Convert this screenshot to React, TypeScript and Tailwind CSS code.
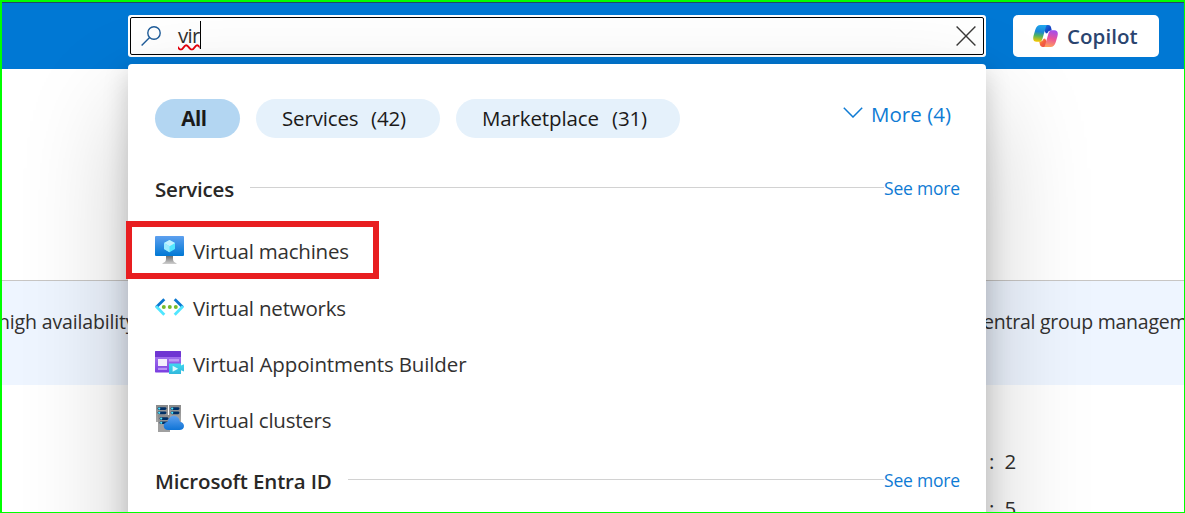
import React from "react";

function SearchIcon() {
  return (
    <svg className="h-5 w-5 shrink-0" viewBox="0 0 20 20" fill="none" stroke="#1f5c99" strokeWidth="1.4">
      <circle cx="13" cy="7" r="6.2" />
      <path d="M8.6 11.4 0.6 19.4" />
    </svg>
  );
}

function CloseIcon() {
  return (
    <svg className="h-5 w-5 shrink-0" viewBox="0 0 20 20" fill="none" stroke="#3b3a39" strokeWidth="1.4">
      <path d="M.6.6 19.4 19.4M19.4.6.6 19.4" />
    </svg>
  );
}

function CopilotIcon() {
  return (
    <svg className="h-[22px] w-[25px] shrink-0" viewBox="0 0 25 22">
      <defs>
        <linearGradient id="cpA" x1="0.5" y1="0" x2="0.4" y2="1">
          <stop offset="0" stopColor="#1fa7ee" />
          <stop offset=".4" stopColor="#1a86d6" />
          <stop offset=".65" stopColor="#52b35c" />
          <stop offset="1" stopColor="#f8c800" />
        </linearGradient>
        <linearGradient id="cpB" x1="0.6" y1="0" x2="0.4" y2="1">
          <stop offset="0" stopColor="#a04df0" />
          <stop offset=".5" stopColor="#ea5399" />
          <stop offset="1" stopColor="#ffa05c" />
        </linearGradient>
        <linearGradient id="cpC" x1="0" y1="0" x2="1" y2="1">
          <stop offset="0" stopColor="#1c7fe0" />
          <stop offset=".6" stopColor="#1443c4" />
          <stop offset="1" stopColor="#2a4bd8" />
        </linearGradient>
        <linearGradient id="cpD" x1="0" y1="0" x2="1" y2="1">
          <stop offset="0" stopColor="#ffb038" />
          <stop offset=".5" stopColor="#f4603c" />
          <stop offset="1" stopColor="#e8485c" />
        </linearGradient>
      </defs>
      <path d="M11 0h4.2c1.500 0 2.400.9 2.800 2.200l.8 3.200c-2.300 0-3.600.6-4.200 2.600L13 8.500 11 5Z" fill="url(#cpC)" />
      <path d="M14 22H9.800c-1.500 0-2.400-.9-2.800-2.200L6.200 16.600c2.300 0 3.600-.6 4.200-2.600L12 13.500 14 17Z" fill="url(#cpD)" />
      <path d="M14 0H7.500C4.800 0 3.200 2 2.300 4.800L.6 10.600C-.5 14.400.6 16.800 3.600 16.800h2.200c2 0 3-1 3.600-2.900L12.500 3.200C12.900 1.600 13.200.6 14 0Z" fill="url(#cpA)" />
      <path d="M11 22h6.500c2.700 0 4.300-2 5.200-4.800l1.700-5.800c1.100-3.800 0-6.200-3-6.200h-2.200c-2 0-3 1-3.600 2.900L12.500 18.800c-.4 1.600-.7 2.600-1.500 3.200Z" fill="url(#cpB)" />
    </svg>
  );
}

function VmIcon() {
  return (
    <svg className="h-[30px] w-[29px] shrink-0" viewBox="0 0 29 30">
      <defs>
        <linearGradient id="vmScreen" x1="0" y1="1" x2="0" y2="0">
          <stop offset="0" stopColor="#0078d4" />
          <stop offset="1" stopColor="#5ea0ef" />
        </linearGradient>
        <linearGradient id="vmStand" x1="0" y1="0" x2="0" y2="1">
          <stop offset="0" stopColor="#707070" />
          <stop offset="1" stopColor="#cfcfcf" />
        </linearGradient>
      </defs>
      <rect y="1" width="29" height="20" rx="1" fill="url(#vmScreen)" />
      <path d="M14.500 5 20 8.100v6L14.500 17.200 9 14.100v-6Z" fill="#50e6ff" />
      <path d="M14.500 5 20 8.100l-5.500 3.200L9 8.100Z" fill="#c3f1ff" />
      <path d="M14.500 11.300v5.900L9 14.100v-6Z" fill="#9cebff" />
      <path d="M11 21h7v3c0 2.500 1.200 3.300 3.500 4.200V29h-14v-.8C9.800 27.300 11 26.500 11 24Z" fill="url(#vmStand)" />
    </svg>
  );
}

function VnetIcon() {
  return (
    <svg className="h-[30px] w-[29px] shrink-0" viewBox="0 0 29 30" fill="none">
      <path d="M9.300 7.200 1.200 15.200" stroke="#0b78d0" strokeWidth="2.800" />
      <path d="m1 14.200 8.300 8.500" stroke="#50e6ff" strokeWidth="2.800" />
      <path d="m19.700 7.200 8.100 8" stroke="#0b78d0" strokeWidth="2.800" />
      <path d="m28 14.200-8.300 8.500" stroke="#50e6ff" strokeWidth="2.800" />
      <circle cx="8.800" cy="15" r="2" fill="#76bc2d" />
      <circle cx="14.800" cy="15" r="2" fill="#76bc2d" />
      <circle cx="20.800" cy="15" r="2" fill="#76bc2d" />
    </svg>
  );
}

function BuilderIcon() {
  return (
    <svg className="h-[30px] w-[29px] shrink-0" viewBox="0 0 29 30">
      <defs>
        <linearGradient id="vbBody" x1="0" y1="1" x2="0" y2="0">
          <stop offset="0" stopColor="#7a3de0" />
          <stop offset="1" stopColor="#b084f2" />
        </linearGradient>
        <linearGradient id="vbCam" x1="0" y1="0" x2="0" y2="1">
          <stop offset="0" stopColor="#3fd8f0" />
          <stop offset="1" stopColor="#32b8dc" />
        </linearGradient>
      </defs>
      <rect y="3" width="26" height="21.500" rx=".8" fill="url(#vbBody)" />
      <path d="M0 9V3.800C0 3.300.3 3 .8 3h24.400c.5 0 .8.3.8.800V9Z" fill="#6f35d2" />
      <rect x="3" y="11" width="9" height="7" fill="#f4eefb" />
      <rect x="14" y="11" width="10" height="2.500" fill="#c09af6" />
      <rect x="3" y="19.800" width="9" height="2.200" fill="#b890f4" />
      <path d="M14 15.500h12v2l3-1.200v7.200l-3-1.200v3.600H14Z" fill="url(#vbCam)" />
      <path d="m17.600 17.700 5.600 3-5.600 3Z" fill="#d9faff" />
    </svg>
  );
}

function ServerRack({ x, y, w }: { x: number; y: number; w: number }) {
  return (
    <g>
      <rect x={x} y={y} width={w} height="17" fill="url(#vcRack)" />
      {[2.200, 6.400].map((dy) => (
        <g key={dy}>
          <rect x={x + 1.6} y={y + dy} width={w - 3.200} height="2.800" rx="1.400" fill="#003067" />
          <circle cx={x + 3.200} cy={y + dy + 1.400} r="1.100" fill="#50e6ff" />
        </g>
      ))}
    </g>
  );
}

function ClusterIcon() {
  return (
    <svg className="h-[30px] w-[29px] shrink-0" viewBox="0 0 29 30">
      <defs>
        <linearGradient id="vcRack" x1="0" y1="0" x2="0" y2="1">
          <stop offset="0" stopColor="#8a8a8a" />
          <stop offset="1" stopColor="#a9a9a9" />
        </linearGradient>
        <linearGradient id="vcCloud" x1="0" y1="1" x2="0" y2="0">
          <stop offset="0" stopColor="#0f74d6" />
          <stop offset="1" stopColor="#5ea0ef" />
        </linearGradient>
      </defs>
      <ServerRack x={1} y={1} w={12} />
      <ServerRack x={14} y={1} w={12} />
      <ServerRack x={3} y={11} w={12} />
      <rect x="3" y="20" width="12" height="8" fill="#a0a0a0" />
      <path d="M13.300 26c-2.700 0-4.600-1.800-4.600-4.100 0-2.200 1.700-3.900 4-4.100.6-3.500 3-6 6.200-6 3.400 0 5.500 2.600 6.100 5.900 2.400.3 4 2 4 4.200 0 2.400-1.900 4.100-4.500 4.100Z" fill="url(#vcCloud)" />
    </svg>
  );
}

const services = [
  { name: "Virtual machines", icon: <VmIcon />, cls: "tracking-[-0.22px] mb-px" },
  { name: "Virtual networks", icon: <VnetIcon />, cls: "tracking-[-0.2px]" },
  { name: "Virtual Appointments Builder", icon: <BuilderIcon />, cls: "tracking-[-0.13px]" },
  { name: "Virtual clusters", icon: <ClusterIcon />, cls: "tracking-[-0.22px]" },
];

function SectionHeading({ title, cls }: { title: string; cls: string }) {
  return (
    <div className="flex h-7 items-center">
      <h2 className={`shrink-0 font-semibold text-[#292827] ${cls}`}>{title}</h2>
      <div className="mb-1 h-px flex-1 bg-[#d2d2d2]" />
      <a className="mb-0.5 w-[77px] shrink-0 text-[17.5px] tracking-[-0.2px] text-[#0f7bd4]">See more</a>
    </div>
  );
}

function ResultsPanel() {
  return (
    <div className="absolute top-[64px] left-[128px] flex h-[520px] w-[858px] flex-col rounded-t-[4px] bg-white pr-[25px] pl-[27px] shadow-[0_46px_104px_rgba(0,0,0,0.22),0_9px_26px_rgba(0,0,0,0.18)]">
      <div className="mt-[35px] flex h-[39px] items-center gap-4 text-[#1b1a19]">
        <button className="h-[39px] w-[85px] rounded-full bg-[#b3d6f2] pr-[7px] pb-[2px] text-[20.5px] font-bold tracking-[-0.02em]">All</button>
        <button className="flex h-[39px] w-[184px] items-center rounded-full bg-[#e5f1fb] pb-[2px] pl-[26px]">
          <span className="w-[89px] text-left tracking-[-0.15px]">Services</span>
          <span className="tracking-[-0.15px]">(42)</span>
        </button>
        <button className="flex h-[39px] w-[224px] items-center rounded-full bg-[#e5f1fb] pb-[2px] pl-[26px]">
          <span className="w-[130px] text-left tracking-[-0.13px]">Marketplace</span>
          <span className="tracking-[-0.15px]">(31)</span>
        </button>
        <button className="mb-[9px] ml-auto flex items-center gap-[8px] pr-[9px] text-[#0f7bd4]">
          <svg className="mb-[4px] h-[11px] w-5" viewBox="0 0 20 11" fill="none" stroke="#0f7bd4" strokeWidth="1.500">
            <path d="m.8.8 9.200 9.200L19.200.8" />
          </svg>
          <span className="w-[81px] text-left tracking-[0.05px]">More (4)</span>
        </button>
      </div>
      <div className="mt-[37px]">
        <SectionHeading title="Services" cls="w-[95px] tracking-[-0.2px]" />
      </div>
      <ul className="mt-[20px]">
        {services.map((s) => (
          <li key={s.name} className={`flex h-14 items-center gap-[9px] text-[#323130] ${s.cls}`}>
            <span className="mb-0.5">{s.icon}</span>
            <span>{s.name}</span>
          </li>
        ))}
      </ul>
      <div className="mt-[19px]">
        <SectionHeading title="Microsoft Entra ID" cls="w-[193px] tracking-[-0.15px]" />
      </div>
    </div>
  );
}

export default function App() {
  return (
    <div className="relative flex h-[513px] w-[1185px] flex-col overflow-hidden border-t-2 border-r border-b border-l-2 border-[#00ff00] bg-white font-['Open_Sans','Noto_Sans',sans-serif] text-[20.5px] leading-7 whitespace-nowrap text-[#323130]">
      <header className="flex h-[67px] shrink-0 border-t border-[#24456b] bg-[#0078d4] pt-3 pl-[126px]">
        <div className="flex h-[42px] w-[858px] rounded-[3px] bg-white p-[2px]">
          <div className="flex flex-1 items-center rounded-[2px] border border-black pr-[7px] pl-[10px]">
            <SearchIcon />
            <div className="-mt-[3px] ml-[17px] flex h-[28px] items-center border-r border-black">
              <span className="tracking-[-0.7px] underline decoration-red-600 decoration-wavy decoration-[1.5px] underline-offset-[1px]">vir</span>
            </div>
            <span className="ml-auto flex">
              <CloseIcon />
            </span>
          </div>
        </div>
        <button className="ml-[27px] flex h-[42px] w-[146px] items-center rounded-[5px] bg-white pl-5 font-semibold text-[#2a446f]">
          <CopilotIcon />
          <span className="ml-[9px] tracking-[0.05px]">Copilot</span>
        </button>
      </header>
      <div className="h-[211px] shrink-0" />
      <div className="flex h-[105px] shrink-0 justify-between border-t border-[#c8c6c4] bg-[#eef5ff] pt-[27px] text-[19.5px]">
        <span className="-ml-[4px] tracking-[-0.15px]">high availability</span>
        <span className="w-[210px] tracking-[-0.25px]">central group management</span>
      </div>
      <div className="mt-[62px] ml-[987px] flex flex-col gap-[19px]">
        <div className="flex gap-[10px]">
          <span>:</span>
          <span>2</span>
        </div>
        <div className="flex gap-[10px]">
          <span>:</span>
          <span>5</span>
        </div>
      </div>
      <div className="absolute -top-[2px] -left-[2px]">
        <ResultsPanel />
        <div className="absolute top-[221px] left-[126px] h-[58px] w-[253px] border-[6px] border-[#e81e20]" />
      </div>
    </div>
  );
}
